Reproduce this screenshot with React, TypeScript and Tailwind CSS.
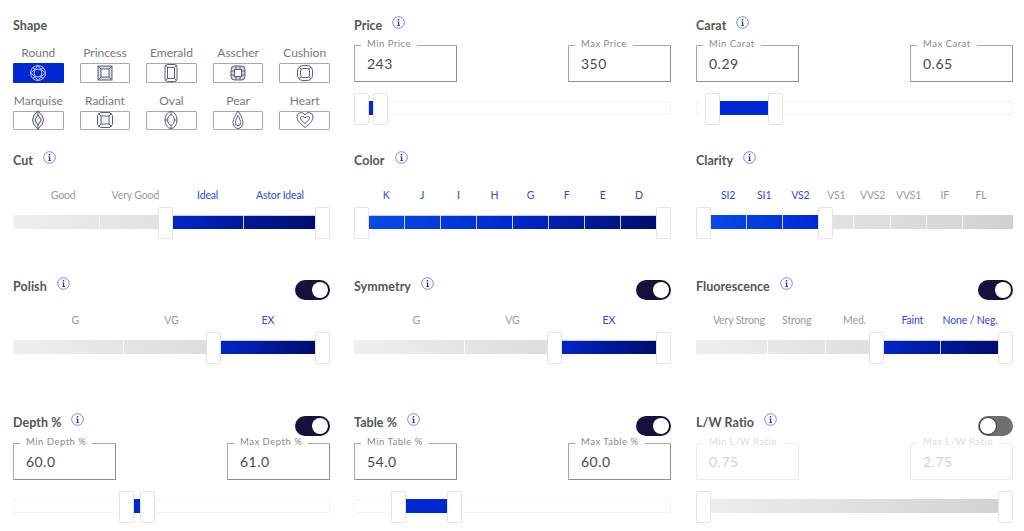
import type { ReactNode } from "react";

const gemPaths: Record<string, ReactNode> = {
    round: (
        <>
            <circle cx="10" cy="10" r="7.5" />
            <circle cx="10" cy="10" r="4" />
            <path d="M10 2.5 12.8 6.2 17.5 10 12.8 13.8 10 17.5 7.2 13.8 2.5 10 7.2 6.2Z" />
            <path d="M4.7 4.7 7.2 6.2M15.3 4.7 12.8 6.2M15.3 15.3 12.8 13.8M4.7 15.3 7.2 13.8" />
        </>
    ),
    princess: (
        <>
            <rect x="3" y="3" width="14" height="14" fill="#56607f" fillOpacity="0.25" />
            <rect x="6" y="6" width="8" height="8" fill="#fff" />
            <path d="M3 3 6 6M17 3 14 6M17 17 14 14M3 17 6 14" />
        </>
    ),
    emerald: (
        <>
            <rect x="4" y="1.5" width="12" height="17" rx="2.5" />
            <rect x="6.5" y="4.5" width="7" height="11" />
            <path d="M4.7 2.3 6.5 4.5M15.3 2.3 13.5 4.5M15.3 17.7 13.5 15.5M4.7 17.7 6.5 15.5" />
        </>
    ),
    asscher: (
        <>
            <rect x="3" y="3" width="14" height="14" rx="3.5" fill="#56607f" fillOpacity="0.25" />
            <rect x="6.5" y="6.5" width="7" height="7" fill="#fff" />
            <path d="M3 8H6.5M3 12H6.5M13.5 8H17M13.5 12H17M8 3V6.5M12 3V6.5M8 13.5V17M12 13.5V17" />
        </>
    ),
    cushion: (
        <>
            <rect x="2.5" y="2.5" width="15" height="15" rx="5.5" />
            <rect x="5.5" y="5.5" width="9" height="9" rx="2.5" />
            <path d="M4.2 4.2 5.9 5.9M15.8 4.2 14.1 5.9M15.8 15.8 14.1 14.1M4.2 15.8 5.9 14.1" />
        </>
    ),
    marquise: (
        <>
            <path d="M10 .8Q21 10 10 19.2-1 10 10 .8Z" fill="#56607f" fillOpacity="0.15" />
            <path d="M10 4.5 13 10 10 15.5 7 10Z" fill="#fff" />
            <path d="M10 .8V4.5M10 15.5V19.2" />
        </>
    ),
    radiant: (
        <>
            <path d="M5.5 2.5H14.5L17.5 5.5V14.5L14.5 17.5H5.5L2.5 14.5V5.5Z" />
            <rect x="6" y="6" width="8" height="8" />
            <path d="M3.5 3.5 6 6M16.5 3.5 14 6M16.5 16.5 14 14M3.5 16.5 6 14" />
        </>
    ),
    oval: (
        <>
            <ellipse cx="10" cy="10" rx="6" ry="8.5" />
            <ellipse cx="10" cy="10" rx="3.3" ry="5.2" />
            <path d="M10 1.5V4.8M10 15.2V18.5M4 10H6.7M13.3 10H16" />
        </>
    ),
    pear: (
        <>
            <path d="M10 1C12.5 5 15 8.5 15 12.5A5 6 0 0 1 5 12.5C5 8.5 7.5 5 10 1Z" />
            <path d="M10 5.5C11.2 8 12.5 10 12.5 12.5A2.5 3.2 0 0 1 7.5 12.5C7.5 10 8.8 8 10 5.5Z" />
        </>
    ),
    heart: (
        <>
            <path d="M10 17.5C5.5 14 2 11 2 7A4.2 4.2 0 0 1 10 5 4.2 4.2 0 0 1 18 7C18 11 14.5 14 10 17.5Z" />
            <path d="M10 13.5C7.5 11.5 5.5 9.8 5.5 7.8 5.5 6 8.5 6 10 8 11.5 6 14.5 6 14.5 7.8 14.5 9.8 12.5 11.5 10 13.5Z" />
        </>
    ),
};

const shapes = [
    ["Round", "round"],
    ["Princess", "princess"],
    ["Emerald", "emerald"],
    ["Asscher", "asscher"],
    ["Cushion", "cushion"],
    ["Marquise", "marquise"],
    ["Radiant", "radiant"],
    ["Oval", "oval"],
    ["Pear", "pear"],
    ["Heart", "heart"],
];

function InfoIcon() {
    return (
        <svg viewBox="0 0 13 13" className="ml-[10px] mt-[-8px] h-[13px] w-[13px] shrink-0">
            <circle cx="6.5" cy="6.5" r="5.8" fill="none" stroke="#6478e6" strokeWidth="0.9" />
            <rect x="5.8" y="3" width="1.4" height="1.4" fill="#1f2f8f" />
            <path d="M5.3 5.4H7.2V9.2H8V10H5.2V9.2H6V6.2H5.3Z" fill="#1f2f8f" />
        </svg>
    );
}

function Toggle({ on }: { on: boolean }) {
    return (
        <div
            className={
                on
                    ? "ml-auto mt-[6px] flex h-5 w-[35px] shrink-0 items-center justify-end rounded-full bg-[#14123c] px-[2px]"
                    : "ml-auto mt-[6px] flex h-5 w-[35px] shrink-0 items-center justify-start rounded-full bg-[#6f6f6f] px-[1px]"
            }
        >
            <div className={on ? "h-4 w-4 rounded-full bg-white" : "h-[18px] w-[18px] rounded-full border border-[#333] bg-white"} />
        </div>
    );
}

function Title({ text, info = true, toggle }: { text: string; info?: boolean; toggle?: boolean }) {
    return (
        <div className="flex h-5 items-center">
            <span className="text-[12.5px] font-bold tracking-[0.05px] text-[#555]">{text}</span>
            {info && <InfoIcon />}
            {toggle !== undefined && <Toggle on={toggle} />}
        </div>
    );
}

function ValueBox({ label, value, disabled }: { label: string; value: string; disabled?: boolean }) {
    return (
        <div
            className={
                disabled
                    ? "relative h-[37px] w-[103px] rounded-[1px] border border-[#ececec] pl-[12px] text-[14px] leading-[35px] tracking-[0.5px] text-[#d4d4d4]"
                    : "relative h-[37px] w-[103px] rounded-[1px] border border-[#a8a8a8] border-b-[#8f8f8f] border-r-[#8f8f8f] pl-[12px] text-[14px] leading-[35px] tracking-[0.5px] text-[#4a4a4a]"
            }
        >
            <span
                className={
                    disabled
                        ? "absolute left-[6px] top-[-8px] bg-white px-[6px] text-[9.5px] leading-[12px] text-[#dcdcdc]"
                        : "absolute left-[6px] top-[-8px] bg-white px-[6px] text-[9.5px] leading-[12px] text-[#888]"
                }
            >
                {label}
            </span>
            {value}
        </div>
    );
}

type SliderProps = {
    from: number;
    to: number;
    ticks?: number[];
    fillClass: string;
    trackClass?: string;
};

function Thumb({ left }: { left: number }) {
    return (
        <div
            className="absolute top-[-8px] h-8 w-[15px] rounded-[2px] border border-[#e4e4e4] bg-white"
            style={{ left }}
        />
    );
}

const greyTrack = "bg-gradient-to-r from-[#efefef] to-[#d0d1d1]";
const faintTrack = "bg-white shadow-[inset_0_0_0_1px_#f4f4f4]";

function Slider({ from, to, ticks = [], fillClass, trackClass = greyTrack }: SliderProps) {
    return (
        <div className={"relative h-[14px] " + trackClass}>
            <div className={"absolute inset-y-0 " + fillClass} style={{ left: from + 14, width: to - from - 14 }} />
            {ticks.map((t) => (
                <div key={t} className="absolute inset-y-0 w-px bg-white/80" style={{ left: t }} />
            ))}
            <Thumb left={from} />
            <Thumb left={to} />
        </div>
    );
}

function Labels({ items, active }: { items: string[]; active: string[] }) {
    return (
        <div className="flex h-[14px] px-[14px] text-[10.5px] leading-[14px] tracking-[-0.15px]">
            {items.map((item) => (
                <span
                    key={item}
                    className={
                        active.includes(item)
                            ? "flex-1 whitespace-nowrap text-center text-[#3048dc]"
                            : "flex-1 whitespace-nowrap text-center text-[#999]"
                    }
                >
                    {item}
                </span>
            ))}
        </div>
    );
}

function ShapePicker() {
    return (
        <div className="mt-[9px] grid grid-cols-5 gap-x-[16px] gap-y-[10px]">
            {shapes.map(([name, key], i) => (
                <div key={name} className="flex flex-col items-stretch">
                    <span className="whitespace-nowrap text-center text-[12px] leading-[15px] text-[#777]">{name}</span>
                    <div
                        className={
                            i === 0
                                ? "mt-[3px] flex h-[19.5px] items-center justify-center rounded-[1px] bg-[#0028d4]"
                                : "mt-[3px] flex h-[19.5px] items-center justify-center rounded-[1px] border border-[#a8a8a8] bg-white"
                        }
                    >
                        <svg
                            viewBox="0 0 20 20"
                            fill="none"
                            stroke={i === 0 ? "#b9c6f5" : "#56607f"}
                            strokeWidth="1"
                            className="h-5 w-5 shrink-0"
                        >
                            {gemPaths[key]}
                        </svg>
                    </div>
                </div>
            ))}
        </div>
    );
}

function RangeBlock({ unit, min, max, from, to, boxTop }: { unit: string; min: string; max: string; from: number; to: number; boxTop: string }) {
    return (
        <>
            <div className={"flex justify-between " + boxTop}>
                <ValueBox label={`Min ${unit}`} value={min} />
                <ValueBox label={`Max ${unit}`} value={max} />
            </div>
            <div className="mt-[19px]">
                <Slider from={from} to={to} fillClass="bg-[#0028d4]" trackClass={faintTrack} />
            </div>
        </>
    );
}

const ordinalFill = "bg-gradient-to-r from-[#0026c9] to-[#000d6e] border-t border-[#c3ccf3]";

export default function App() {
    return (
        <div className="h-[531px] w-[1024px] overflow-hidden bg-white pl-[13px] font-['Lato',sans-serif]">
            <div className="grid grid-cols-[317px_318px_317px] grid-rows-[135px_126px_136px_134px] gap-x-[24px]">
                <div className="pt-[16px]">
                    <Title text="Shape" info={false} />
                    <ShapePicker />
                </div>
                <div className="pr-px pt-[16px]">
                    <Title text="Price" />
                    <RangeBlock unit="Price" min="243" max="350" from={0} to={19} boxTop="mt-[9px]" />
                </div>
                <div className="pt-[16px]">
                    <Title text="Carat" />
                    <RangeBlock unit="Carat" min="0.29" max="0.65" from={9} to={72} boxTop="mt-[9px]" />
                </div>

                <div className="pt-[16px]">
                    <Title text="Cut" />
                    <div className="mt-[17px]">
                        <Labels items={["Good", "Very Good", "Ideal", "Astor Ideal"]} active={["Ideal", "Astor Ideal"]} />
                    </div>
                    <div className="mt-[13px]">
                        <Slider from={145} to={302} ticks={[86, 230]} fillClass={ordinalFill} />
                    </div>
                </div>
                <div className="pr-px pt-[16px]">
                    <Title text="Color" />
                    <div className="mt-[17px]">
                        <Labels items={["K", "J", "I", "H", "G", "F", "E", "D"]} active={["K", "J", "I", "H", "G", "F", "E", "D"]} />
                    </div>
                    <div className="mt-[13px]">
                        <Slider
                            from={0}
                            to={302}
                            ticks={[50, 86, 122, 158, 194, 230, 266]}
                            fillClass="bg-gradient-to-r from-[#0a4ae8] via-[#0028d0] to-[#000d6e] border-t border-[#c3ccf3]"
                        />
                    </div>
                </div>
                <div className="pt-[16px]">
                    <Title text="Clarity" />
                    <div className="mt-[17px]">
                        <Labels
                            items={["SI2", "SI1", "VS2", "VS1", "VVS2", "VVS1", "IF", "FL"]}
                            active={["SI2", "SI1", "VS2"]}
                        />
                    </div>
                    <div className="mt-[13px]">
                        <Slider
                            from={0}
                            to={122}
                            ticks={[50, 86, 157, 194, 230, 266]}
                            fillClass="bg-gradient-to-r from-[#0a4ae8] to-[#0028d4]"
                        />
                    </div>
                </div>

                <div className="pt-[16px]">
                    <Title text="Polish" toggle={true} />
                    <div className="mt-[16px]">
                        <Labels items={["G", "VG", "EX"]} active={["EX"]} />
                    </div>
                    <div className="mt-[13px]">
                        <Slider from={193} to={302} ticks={[110]} fillClass={ordinalFill} />
                    </div>
                </div>
                <div className="pr-px pt-[16px]">
                    <Title text="Symmetry" toggle={true} />
                    <div className="mt-[16px]">
                        <Labels items={["G", "VG", "EX"]} active={["EX"]} />
                    </div>
                    <div className="mt-[13px]">
                        <Slider from={193} to={302} ticks={[110]} fillClass={ordinalFill} />
                    </div>
                </div>
                <div className="pt-[16px]">
                    <Title text="Fluorescence" toggle={true} />
                    <div className="mt-[16px]">
                        <Labels items={["Very Strong", "Strong", "Med.", "Faint", "None / Neg."]} active={["Faint", "None / Neg."]} />
                    </div>
                    <div className="mt-[13px]">
                        <Slider from={173} to={302} ticks={[71, 129, 244]} fillClass={ordinalFill} />
                    </div>
                </div>

                <div className="pt-[16px]">
                    <Title text="Depth %" toggle={true} />
                    <RangeBlock unit="Depth %" min="60.0" max="61.0" from={106} to={127} boxTop="mt-[10px]" />
                </div>
                <div className="pr-px pt-[16px]">
                    <Title text="Table %" toggle={true} />
                    <RangeBlock unit="Table %" min="54.0" max="60.0" from={37} to={93} boxTop="mt-[10px]" />
                </div>
                <div className="pt-[16px]">
                    <Title text="L/W Ratio" toggle={false} />
                    <div className="mt-[10px] flex justify-between">
                        <ValueBox label="Min L/W Ratio" value="0.75" disabled />
                        <ValueBox label="Max L/W Ratio" value="2.75" disabled />
                    </div>
                    <div className="mt-[19px]">
                        <Slider from={0} to={302} fillClass="bg-transparent" />
                    </div>
                </div>
            </div>
        </div>
    );
}
